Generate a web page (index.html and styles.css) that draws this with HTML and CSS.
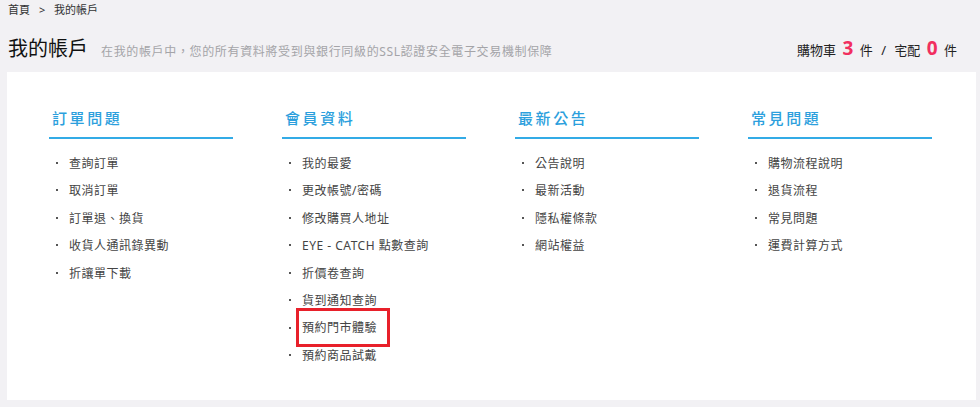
FILE: index.html
```html
<!DOCTYPE HTML>
<html lang="zh-Hant-TW">
<head>
    <meta http-equiv="Content-Type" content="text/html; charset=UTF-8"/>
    <title>我的帳戶</title>
    <link rel="stylesheet" href="styles.css">
</head>
<body>

<div class="crumb">首頁 <span class="sep">&gt;</span> 我的帳戶</div>

<div class="top">
    <div class="titleBox">
        <h1>我的帳戶</h1>
        <span class="sub">在我的帳戶中，您的所有資料將受到與銀行同級的SSL認證安全電子交易機制保障</span>
    </div>
    <div class="cart">
        購物車 <b>3</b> 件 <span class="slash">/</span> 宅配 <b>0</b> 件
    </div>
</div>

<div class="panel">

    <div class="col">
        <h2>訂單問題</h2>
        <ul>
            <li>查詢訂單</li>
            <li>取消訂單</li>
            <li>訂單退、換貨</li>
            <li>收貨人通訊錄異動</li>
            <li>折讓單下載</li>
        </ul>
    </div>

    <div class="col">
        <h2>會員資料</h2>
        <ul>
            <li>我的最愛</li>
            <li>更改帳號/密碼</li>
            <li>修改購買人地址</li>
            <li>EYE - CATCH 點數查詢</li>
            <li>折價卷查詢</li>
            <li>貨到通知查詢</li>
            <li><span class="mark">預約門市體驗</span></li>
            <li>預約商品試戴</li>
        </ul>
    </div>

    <div class="col">
        <h2>最新公告</h2>
        <ul>
            <li>公告說明</li>
            <li>最新活動</li>
            <li>隱私權條款</li>
            <li>網站權益</li>
        </ul>
    </div>

    <div class="col">
        <h2>常見問題</h2>
        <ul>
            <li>購物流程說明</li>
            <li>退貨流程</li>
            <li>常見問題</li>
            <li>運費計算方式</li>
        </ul>
    </div>

</div> <!-- end of panel -->

</body>
</html>
```

FILE: styles.css
```css
body {
    margin: 0;
    background: #f2f1f4;
    font-family: "Noto Sans", "Noto Sans CJK TC", sans-serif;
    color: #333;
}

.crumb {
    padding: 3px 8px 5px;
    font-size: 11px;
    line-height: 14px;
    color: #333;
}

.crumb .sep {
    margin: 0 6px;
}

.top {
    height: 50px;
    box-sizing: border-box;
    padding: 4px 23px 0 8px;
    display: flex;
    align-items: center;
    justify-content: space-between;
}

.titleBox {
    display: flex;
    align-items: baseline;
}

h1 {
    margin: 0;
    font-size: 20px;
    font-weight: normal;
    line-height: 26px;
    color: #111;
}

.sub {
    margin-left: 13px;
    font-size: 12px;
    letter-spacing: 0.65px;
    color: #a4a4a8;
}

.cart {
    font-size: 13px;
    color: #222;
    line-height: 24px;
}

.cart b {
    font-size: 19px;
    font-weight: bold;
    color: #f12f5f;
    margin: 0 3px;
}

.cart .slash {
    margin: 0 5px;
}

.panel {
    margin: 0 4px 0 7px;
    height: 328px;
    box-sizing: border-box;
    background: #fff;
    padding: 32px 0 0 42px;
    display: flex;
    gap: 49px;
}

.col {
    width: 184px;
}

h2 {
    margin: 0;
    padding: 0 0 5px 3px;
    font-size: 15px;
    font-weight: 500;
    line-height: 28px;
    letter-spacing: 2.6px;
    color: #2c9fdd;
    border-bottom: 2px solid #33abe6;
}

ul {
    list-style: none;
    margin: 10px 0 0;
    padding: 0;
}

li {
    display: flex;
    align-items: center;
    height: 27.5px;
    font-size: 12px;
    letter-spacing: 0.5px;
    color: #444;
}

li::before {
    content: "";
    width: 2px;
    height: 2px;
    background: #555;
    margin: 0 11px 0 7px;
    flex: none;
}

.mark {
    display: inline-block;
    border: 3px solid #e8202a;
    padding: 9px 10px 8px 3px;
    margin: -12px -13px -11px -6px;
    line-height: 16px;
}
```
